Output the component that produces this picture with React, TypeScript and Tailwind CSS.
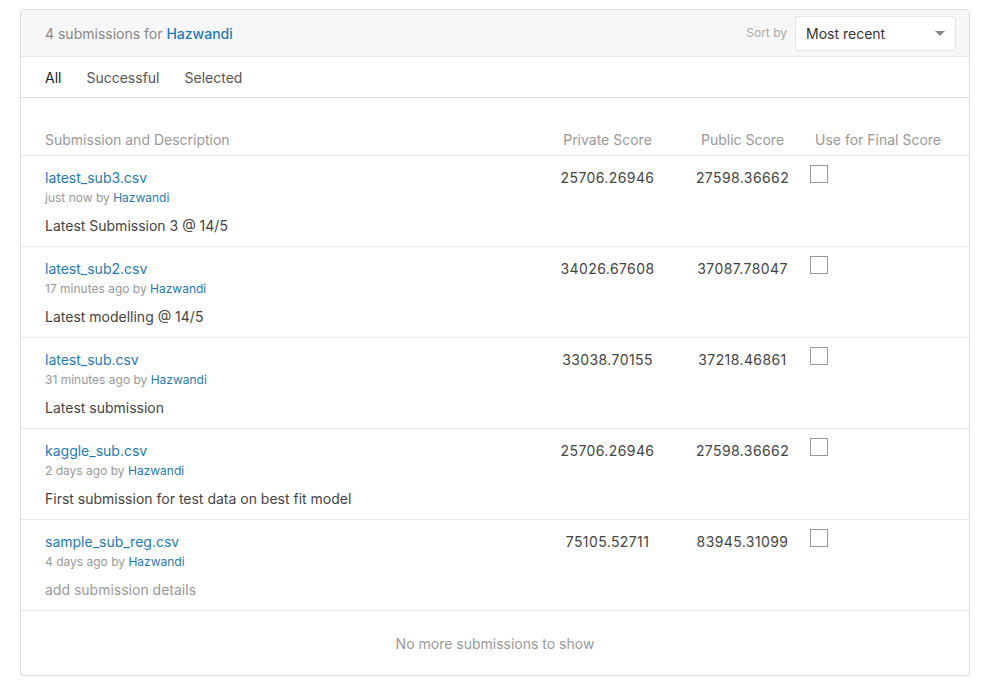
import React from 'react';

const rows = [
  { file: 'latest_sub3.csv', when: 'just now', desc: 'Latest Submission 3 @ 14/5', priv: '25706.26946', pub: '27598.36662' },
  { file: 'latest_sub2.csv', when: '17 minutes ago', desc: 'Latest modelling @ 14/5', priv: '34026.67608', pub: '37087.78047' },
  { file: 'latest_sub.csv', when: '31 minutes ago', desc: 'Latest submission', priv: '33038.70155', pub: '37218.46861' },
  { file: 'kaggle_sub.csv', when: '2 days ago', desc: 'First submission for test data on best fit model', priv: '25706.26946', pub: '27598.36662' },
  { file: 'sample_sub_reg.csv', when: '4 days ago', desc: 'add submission details', priv: '75105.52711', pub: '83945.31099', empty: true },
];

export default function App() {
  return (
    <div className="min-h-[694px] bg-white px-[20px] pt-[9px] font-['Inter',sans-serif]">
      <div className="w-[950px] rounded-[3px] border border-[#dedede]">
        {/* header */}
        <div className="flex h-[47px] items-center justify-between border-b border-[#e6e6e6] bg-[#f7f7f7] pl-[24px] pr-[13px]">
          <div className="text-[14px] text-[#888]">
            4 submissions for <span className="font-medium text-[#1f7ab8]">Hazwandi</span>
          </div>
          <div className="flex items-center">
            <span className="mr-[8px] text-[12px] text-[#aaa]">Sort by</span>
            <div className="flex h-[35px] w-[161px] items-center justify-between rounded-[3px] border border-[#e4e4e4] bg-white pl-[10px] pr-[10px]">
              <span className="text-[14px] text-[#333]">Most recent</span>
              <span className="h-0 w-0 border-x-[5px] border-t-[5px] border-x-transparent border-t-[#888]" />
            </div>
          </div>
        </div>
        {/* tabs */}
        <div className="flex h-[41px] items-center gap-[25px] border-b border-[#dedede] pl-[24px] text-[14px] text-[#555]">
          <span className="text-[#222]">All</span>
          <span>Successful</span>
          <span>Selected</span>
        </div>
        {/* table head */}
        <div className="flex items-end border-b border-[#e8e8e8] pt-[31px] pb-[5px] text-[14px] text-[#999]">
          <div className="w-[519px] pl-[24px]">Submission and Description</div>
          <div className="w-[135px] text-center">Private Score</div>
          <div className="w-[135px] text-center">Public Score</div>
          <div className="flex-1 pl-[5px]">Use for Final Score</div>
        </div>
        {rows.map((r) => (
          <div key={r.file} className="flex h-[91px] border-b border-[#e8e8e8] pt-[12px]">
            <div className="w-[519px] pl-[24px]">
              <div className="text-[14px] leading-[20px] text-[#1f7ab8]">{r.file}</div>
              <div className="text-[12px] leading-[20px] text-[#999]">
                {r.when} by <span className="text-[#1f7ab8]">Hazwandi</span>
              </div>
              <div className={`mt-[8px] text-[14px] leading-[20px] ${r.empty ? 'text-[#999]' : 'text-[#444]'}`}>{r.desc}</div>
            </div>
            <div className="w-[135px] text-center text-[14px] leading-[20px] tracking-[0.4px] text-[#444]">{r.priv}</div>
            <div className="w-[135px] text-center text-[14px] leading-[20px] tracking-[0.4px] text-[#444]">{r.pub}</div>
            <div className="flex-1">
              <div className="-mt-[3px] h-[18px] w-[18px] border border-[#999] bg-white" />
            </div>
          </div>
        ))}
        <div className="flex h-[64px] items-center justify-center text-[14px] text-[#999]">No more submissions to show</div>
      </div>
    </div>
  );
}
